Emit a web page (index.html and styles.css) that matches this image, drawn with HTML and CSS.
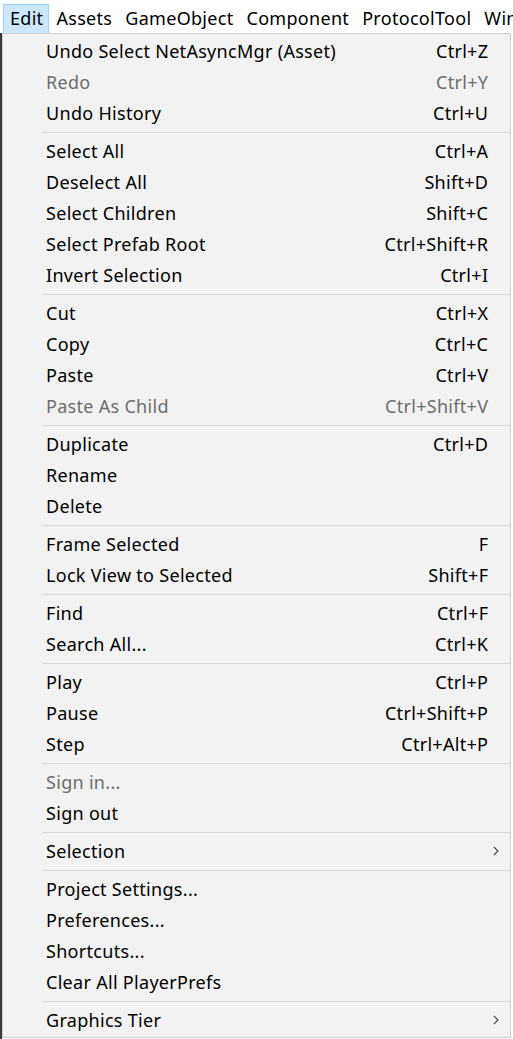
FILE: index.html
```html
<!DOCTYPE html>
<html>
<head>
<meta charset="utf-8">
<link rel="stylesheet" href="styles.css">
</head>
<body>
<div class="menubar">
  <div class="mitem active">Edit</div>
  <div class="mitem">Assets</div>
  <div class="mitem">GameObject</div>
  <div class="mitem">Component</div>
  <div class="mitem">ProtocolTool</div>
  <div class="mitem">Window</div>
</div>
<div class="stage">
  <div class="under"></div>
  <div class="dropdown">
    <div class="row"><span class="label">Undo Select NetAsyncMgr (Asset)</span><span class="key">Ctrl+Z</span></div>
    <div class="row disabled"><span class="label">Redo</span><span class="key">Ctrl+Y</span></div>
    <div class="row"><span class="label">Undo History</span><span class="key">Ctrl+U</span></div>
    <div class="sep"></div>
    <div class="row"><span class="label">Select All</span><span class="key">Ctrl+A</span></div>
    <div class="row"><span class="label">Deselect All</span><span class="key">Shift+D</span></div>
    <div class="row"><span class="label">Select Children</span><span class="key">Shift+C</span></div>
    <div class="row"><span class="label">Select Prefab Root</span><span class="key">Ctrl+Shift+R</span></div>
    <div class="row"><span class="label">Invert Selection</span><span class="key">Ctrl+I</span></div>
    <div class="sep"></div>
    <div class="row"><span class="label">Cut</span><span class="key">Ctrl+X</span></div>
    <div class="row"><span class="label">Copy</span><span class="key">Ctrl+C</span></div>
    <div class="row"><span class="label">Paste</span><span class="key">Ctrl+V</span></div>
    <div class="row disabled"><span class="label">Paste As Child</span><span class="key">Ctrl+Shift+V</span></div>
    <div class="sep"></div>
    <div class="row"><span class="label">Duplicate</span><span class="key">Ctrl+D</span></div>
    <div class="row"><span class="label">Rename</span></div>
    <div class="row"><span class="label">Delete</span></div>
    <div class="sep"></div>
    <div class="row"><span class="label">Frame Selected</span><span class="key">F</span></div>
    <div class="row"><span class="label">Lock View to Selected</span><span class="key">Shift+F</span></div>
    <div class="sep"></div>
    <div class="row"><span class="label">Find</span><span class="key">Ctrl+F</span></div>
    <div class="row"><span class="label">Search All...</span><span class="key">Ctrl+K</span></div>
    <div class="sep"></div>
    <div class="row"><span class="label">Play</span><span class="key">Ctrl+P</span></div>
    <div class="row"><span class="label">Pause</span><span class="key">Ctrl+Shift+P</span></div>
    <div class="row"><span class="label">Step</span><span class="key">Ctrl+Alt+P</span></div>
    <div class="sep"></div>
    <div class="row disabled"><span class="label">Sign in...</span></div>
    <div class="row"><span class="label">Sign out</span></div>
    <div class="sep"></div>
    <div class="row"><span class="label">Selection</span><svg class="arrow" width="6" height="10" viewBox="0 0 6 10"><path d="M0.8 0.8 L5 5 L0.8 9.2" fill="none" stroke="#3a3a3a" stroke-width="1.1"/></svg></div>
    <div class="sep"></div>
    <div class="row"><span class="label">Project Settings...</span></div>
    <div class="row"><span class="label">Preferences...</span></div>
    <div class="row"><span class="label">Shortcuts...</span></div>
    <div class="row"><span class="label">Clear All PlayerPrefs</span></div>
    <div class="sep"></div>
    <div class="row"><span class="label">Graphics Tier</span><svg class="arrow" width="6" height="10" viewBox="0 0 6 10"><path d="M0.8 0.8 L5 5 L0.8 9.2" fill="none" stroke="#3a3a3a" stroke-width="1.1"/></svg></div>
  </div>
  <div class="gutter"></div>
</div>
</body>
</html>
```
FILE: styles.css
```css
html, body {
  margin: 0;
  padding: 0;
  background: #ffffff;
  overflow: hidden;
}
body {
  width: 513px;
  height: 1039px;
  font-family: "Noto Sans", "Open Sans", sans-serif;
  font-size: 18px;
  letter-spacing: 0.3px;
  color: #000;
}
.menubar {
  height: 33px;
  display: flex;
  align-items: flex-end;
  padding-left: 3px;
  white-space: nowrap;
  overflow: hidden;
}
.mitem {
  height: 28px;
  line-height: 26px;
  padding: 0 5px 0 6px;
  border: 1px solid transparent;
  border-bottom: none;
  flex: none;
}
.mitem.active {
  background: #cce8ff;
  border-color: #99d1ff;
}
.stage {
  display: flex;
  height: 1006px;
}
.under {
  width: 2px;
  background: #3a3a3a;
  flex: none;
}
.gutter {
  width: 2px;
  flex: none;
}
.dropdown {
  width: 507px;
  background: #f2f2f2;
  border: 1px solid #cccccc;
  padding: 2px 0 1px 0;
  align-self: flex-start;
}
.row {
  height: 29px;
  display: flex;
  align-items: center;
  padding: 0 22px 2px 43px;
  white-space: nowrap;
}
.row .label {
  flex: 1;
}
.row .key {
  flex: none;
  margin-right: -0.3px;
}
.row.disabled {
  color: #6d6d6d;
}
.arrow {
  flex: none;
  margin-right: -11px;
}
.sep {
  height: 7px;
  display: flex;
  align-items: center;
  margin-left: 39px;
}
.sep::before {
  content: "";
  display: block;
  width: 100%;
  height: 1px;
  background: #d7d7d7;
}
```
